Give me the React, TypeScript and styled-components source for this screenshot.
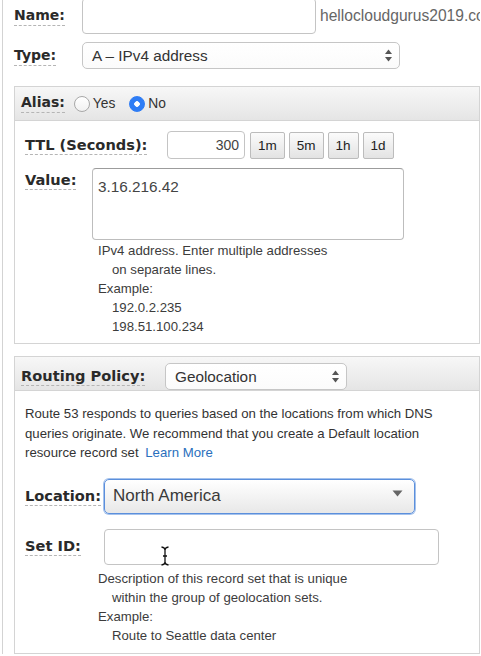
import React from 'react';
import { styled, createGlobalStyle } from 'styled-components';

const GlobalStyle = createGlobalStyle`
  html, body {
    margin: 0;
    padding: 0;
    background: #fff;
    overflow: hidden;
  }
  body {
    font-family: "Liberation Sans", Arial, sans-serif;
    color: #333;
  }
  * { box-sizing: border-box; }
`;

const Page = styled.div`
  margin-left: 2px;
  border-left: 1px solid #d3d3d3;
  padding: 0 1px 0 11px;
  height: 656px;
`;

const TopRow = styled.div<{ $top: number; $height: number }>`
  display: flex;
  align-items: center;
  margin-top: ${({ $top }) => $top}px;
  height: ${({ $height }) => $height}px;
  white-space: nowrap;
`;

const LabelCell = styled.div<{ $width: number; $alignTop?: boolean }>`
  flex: none;
  width: ${({ $width }) => $width}px;
  align-self: ${({ $alignTop }) => ($alignTop ? 'flex-start' : 'center')};
  padding-top: ${({ $alignTop }) => ($alignTop ? '3px' : '0')};
`;

const Label = styled.span<{ $size?: number }>`
  display: inline-block;
  font-family: "DejaVu Sans", Verdana, sans-serif;
  font-weight: bold;
  font-size: ${({ $size }) => $size ?? 14.6}px;
  line-height: 17px;
  color: #2a2a2a;
  padding-bottom: 1px;
  border-bottom: 1px dashed #b5b5b5;
  white-space: nowrap;
`;

const TextInput = styled.div<{ $width: number; $height: number; $align?: string }>`
  flex: none;
  position: relative;
  width: ${({ $width }) => $width}px;
  height: ${({ $height }) => $height}px;
  border: 1px solid #c4c4c4;
  border-radius: 4px;
  background: #fff;
  display: flex;
  align-items: center;
  justify-content: ${({ $align }) => ($align === 'right' ? 'flex-end' : 'flex-start')};
  padding: 0 5px;
  font-size: 14px;
  color: #444;
`;

const Suffix = styled.div`
  flex: 1;
  min-width: 0;
  margin-left: 4px;
  font-size: 15.6px;
  color: #666;
  overflow: hidden;
`;

const Select = styled.div<{ $width: number; $height: number }>`
  flex: none;
  width: ${({ $width }) => $width}px;
  height: ${({ $height }) => $height}px;
  border: 1px solid #c6c6c6;
  border-radius: 5px;
  background: linear-gradient(#ffffff, #fbfbfb);
  display: flex;
  align-items: center;
  justify-content: space-between;
  padding: 0 6px 0 9px;
  font-size: 15.3px;
  color: #333;
`;

const FocusSelect = styled(Select)`
  border: 1px solid #5b8fdc;
  box-shadow: 0 0 0 1px rgba(91, 143, 220, 0.55);
  background: linear-gradient(#ffffff, #e8e8e8);
  font-size: 17px;
  padding: 0 6px 0 8px;
  color: #3a3a3a;
`;

const Panel = styled.section<{ $top: number; $height: number }>`
  margin-top: ${({ $top }) => $top}px;
  height: ${({ $height }) => $height}px;
  border: 1px solid #d4d4d4;
`;

const PanelHeader = styled.div<{ $padTop?: number }>`
  height: 34px;
  border-bottom: 1px solid #d4d4d4;
  background: linear-gradient(#f7f7f7, #e5e5e5);
  display: flex;
  align-items: center;
  padding: ${({ $padTop }) => $padTop ?? 0}px 0 0 6px;
`;

const Radio = styled.span<{ $checked?: boolean }>`
  display: inline-block;
  width: 16px;
  height: 16px;
  border-radius: 50%;
  margin: 0 3px 0 ${({ $checked }) => ($checked ? 14 : 9)}px;
  border: 1px solid ${({ $checked }) => ($checked ? '#2f7df5' : '#a8a8a8')};
  background: ${({ $checked }) =>
    $checked
      ? 'radial-gradient(circle, #fff 0 2.5px, #2f7df5 3px)'
      : 'linear-gradient(#fff, #f1f1f1)'};
`;

const RadioText = styled.span`
  font-size: 13.8px;
  color: #333;
`;

const PanelBody = styled.div<{ $pad: string }>`
  padding: ${({ $pad }) => $pad};
`;

const FieldRow = styled.div<{ $top?: number }>`
  display: flex;
  align-items: center;
  margin-top: ${({ $top }) => $top ?? 0}px;
`;

const ButtonGroup = styled.div`
  display: flex;
  gap: 4px;
  margin-left: 5px;
`;

const SmallButton = styled.button`
  height: 27px;
  padding: 0 7px;
  border: 1px solid #bcbcbc;
  border-radius: 2px;
  background: linear-gradient(#fbfbfb, #e3e3e3);
  font-family: "Liberation Sans", Arial, sans-serif;
  font-size: 13.5px;
  color: #222;
`;

const TextArea = styled.div`
  width: 312px;
  height: 72px;
  border: 1px solid #bdbdbd;
  border-top-color: #9c9c9c;
  border-radius: 4px;
  padding: 9px 5px;
  font-size: 15.3px;
  line-height: 18px;
  color: #444;
`;

const Help = styled.div<{ $left: number; $top: number }>`
  margin: ${({ $top }) => $top}px 0 0 ${({ $left }) => $left}px;
  font-size: 13.2px;
  line-height: 19px;
  color: #3c3c3c;
`;

const HelpLine = styled.div<{ $indent?: boolean }>`
  padding-left: ${({ $indent }) => ($indent ? 14 : 0)}px;
  white-space: nowrap;
`;

const Paragraph = styled.p`
  margin: 0;
  font-size: 13.2px;
  line-height: 19.5px;
  color: #333;
`;

const Link = styled.a`
  color: #2a6fbd;
  text-decoration: none;
  margin-left: 3px;
`;

const Cursor = styled.svg`
  position: absolute;
  left: 55px;
  top: 16px;
`;

const UpDown = () => (
  <svg width="9" height="13" viewBox="0 0 9 13">
    <path d="M4.5 0.5 L8 5 L1 5 Z" fill="#555" />
    <path d="M4.5 12.5 L8 8 L1 8 Z" fill="#555" />
  </svg>
);

const Caret = () => (
  <svg width="11" height="7" viewBox="0 0 11 7" style={{ marginRight: 5, marginBottom: 6 }}>
    <path d="M0.5 0.5 L10.5 0.5 L5.5 6.5 Z" fill="#666" />
  </svg>
);

export default function App() {
  return (
    <>
      <GlobalStyle />
      <Page>
        <TopRow $top={-2} $height={36}>
          <LabelCell $width={68}>
            <Label $size={14}>Name:</Label>
          </LabelCell>
          <TextInput $width={234} $height={36} />
          <Suffix>hellocloudgurus2019.co</Suffix>
        </TopRow>
        <TopRow $top={8} $height={27}>
          <LabelCell $width={68}>
            <Label $size={14}>Type:</Label>
          </LabelCell>
          <Select $width={318} $height={27}>
            <span>A – IPv4 address</span>
            <UpDown />
          </Select>
        </TopRow>

        <Panel $top={17} $height={258}>
          <PanelHeader>
            <Label $size={14}>Alias:</Label>
            <Radio />
            <RadioText>Yes</RadioText>
            <Radio $checked />
            <RadioText>No</RadioText>
          </PanelHeader>
          <PanelBody $pad="10px 10px 0 10px">
            <FieldRow>
              <LabelCell $width={142}>
                <Label>TTL (Seconds):</Label>
              </LabelCell>
              <TextInput $width={78} $height={28} $align="right">300</TextInput>
              <ButtonGroup>
                <SmallButton>1m</SmallButton>
                <SmallButton>5m</SmallButton>
                <SmallButton>1h</SmallButton>
                <SmallButton>1d</SmallButton>
              </ButtonGroup>
            </FieldRow>
            <FieldRow $top={9}>
              <LabelCell $width={67} $alignTop>
                <Label>Value:</Label>
              </LabelCell>
              <TextArea>3.16.216.42</TextArea>
            </FieldRow>
            <Help $left={73} $top={1}>
              <HelpLine>IPv4 address. Enter multiple addresses</HelpLine>
              <HelpLine $indent>on separate lines.</HelpLine>
              <HelpLine>Example:</HelpLine>
              <HelpLine $indent>192.0.2.235</HelpLine>
              <HelpLine $indent>198.51.100.234</HelpLine>
            </Help>
          </PanelBody>
        </Panel>

        <Panel $top={12} $height={298}>
          <PanelHeader $padTop={6}>
            <LabelCell $width={144}>
              <Label>Routing Policy:</Label>
            </LabelCell>
            <Select $width={182} $height={27}>
              <span>Geolocation</span>
              <UpDown />
            </Select>
          </PanelHeader>
          <PanelBody $pad="13px 10px 0 10px">
            <Paragraph>
              Route 53 responds to queries based on the locations from which DNS
              <br />
              queries originate. We recommend that you create a Default location
              <br />
              resource record set <Link href="#">Learn More</Link>
            </Paragraph>
            <FieldRow $top={16}>
              <LabelCell $width={79}>
                <Label>Location:</Label>
              </LabelCell>
              <FocusSelect $width={311} $height={35}>
                <span>North America</span>
                <Caret />
              </FocusSelect>
            </FieldRow>
            <FieldRow $top={15}>
              <LabelCell $width={79}>
                <Label>Set ID:</Label>
              </LabelCell>
              <TextInput $width={335} $height={36}>
                <Cursor width="10" height="20" viewBox="0 0 10 20">
                  <path
                    d="M1.5 1 Q5 1.5 5 4 L5 16 Q5 18.5 1.5 19 M8.5 1 Q5 1.5 5 4 M5 16 Q5 18.5 8.5 19 M3 10 L7 10"
                    stroke="#111"
                    strokeWidth="1.3"
                    fill="none"
                  />
                </Cursor>
              </TextInput>
            </FieldRow>
            <Help $left={73} $top={4}>
              <HelpLine>Description of this record set that is unique</HelpLine>
              <HelpLine $indent>within the group of geolocation sets.</HelpLine>
              <HelpLine>Example:</HelpLine>
              <HelpLine $indent>Route to Seattle data center</HelpLine>
            </Help>
          </PanelBody>
        </Panel>
      </Page>
    </>
  );
}
